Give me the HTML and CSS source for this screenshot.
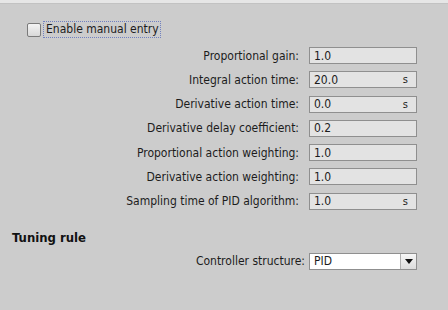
FILE: index.html
```html
<!DOCTYPE html>
<html lang="en">
<head>
    <meta charset="UTF-8">
    <title>PID parameters</title>
    <link rel="stylesheet" href="styles.css">
</head>
<body>
    <div class="top-strip"></div>

    <div class="manual-row">
        <span class="checkbox"></span>
        <span class="manual-label">Enable manual entry</span>
    </div>

    <div class="params">
        <div class="param-row">
            <span class="param-label">Proportional gain:</span>
            <div class="field"><span>1.0</span></div>
        </div>
        <div class="param-row">
            <span class="param-label">Integral action time:</span>
            <div class="field"><span>20.0</span><span class="unit">s</span></div>
        </div>
        <div class="param-row">
            <span class="param-label">Derivative action time:</span>
            <div class="field"><span>0.0</span><span class="unit">s</span></div>
        </div>
        <div class="param-row">
            <span class="param-label">Derivative delay coefficient:</span>
            <div class="field"><span>0.2</span></div>
        </div>
        <div class="param-row">
            <span class="param-label">Proportional action weighting:</span>
            <div class="field"><span>1.0</span></div>
        </div>
        <div class="param-row">
            <span class="param-label">Derivative action weighting:</span>
            <div class="field"><span>1.0</span></div>
        </div>
        <div class="param-row">
            <span class="param-label">Sampling time of PID algorithm:</span>
            <div class="field"><span>1.0</span><span class="unit">s</span></div>
        </div>
    </div>

    <h2 class="section-title">Tuning rule</h2>

    <div class="select-row">
        <span class="select-label">Controller structure:</span>
        <div class="select">
            <span class="select-value">PID</span>
            <span class="select-btn">
                <svg width="8" height="5" viewBox="0 0 8 5"><path d="M0 0H8L4 5Z" fill="#111"/></svg>
            </span>
        </div>
    </div>
</body>
</html>
```

FILE: styles.css
```css
body {
    margin: 0;
    background: #cccccc;
    font-family: 'DejaVu Sans Condensed', 'DejaVu Sans', sans-serif;
    font-size: 12px;
    color: #1c1c1c;
    height: 310px;
    overflow: hidden;
}

.top-strip {
    height: 3px;
    background: #e6e6e6;
    border-bottom: 1px solid #c2c2c2;
}

.manual-row {
    display: flex;
    align-items: center;
    gap: 2px;
    margin-top: 17px;
    padding-left: 27px;
    height: 17px;
}

.checkbox {
    width: 12px;
    height: 12px;
    border: 1px solid #7a7a7a;
    border-radius: 2px;
    background: linear-gradient(#f4f4f4, #d8d8d8);
}

.manual-label {
    padding: 0 1px 1px 2px;
    border: 1px dotted #7080c0;
}

.params {
    display: flex;
    flex-direction: column;
    gap: 7.3px;
    margin-top: 9px;
    padding-right: 31px;
}

.param-row {
    display: flex;
    justify-content: flex-end;
    align-items: center;
    gap: 10px;
    height: 17px;
}

.field {
    height: 15px;
    border: 1px solid #8f8f8f;
    background: #e3e3e3;
    display: flex;
    align-items: center;
    justify-content: space-between;
    padding: 0 8px 0 4px;
    width: 94px;
}

.unit {
    font-size: 11px;
}

.section-title {
    margin: 19px 0 0 12px;
    font-size: 13px;
    font-weight: bold;
    color: #111;
    height: 17px;
    line-height: 17px;
}

.select-row {
    display: flex;
    justify-content: flex-end;
    align-items: center;
    gap: 4px;
    margin-top: 7px;
    padding-right: 31px;
    height: 17px;
}

.select {
    width: 106px;
    height: 15px;
    border: 1px solid #8f8f8f;
    background: #ffffff;
    display: flex;
    align-items: center;
}

.select-value {
    flex: 1;
    padding-left: 4px;
}

.select-btn {
    width: 15px;
    height: 15px;
    border-left: 1px solid #b0b0b0;
    background: linear-gradient(#f6f6f6, #dcdcdc);
    display: flex;
    align-items: center;
    justify-content: center;
}
```
